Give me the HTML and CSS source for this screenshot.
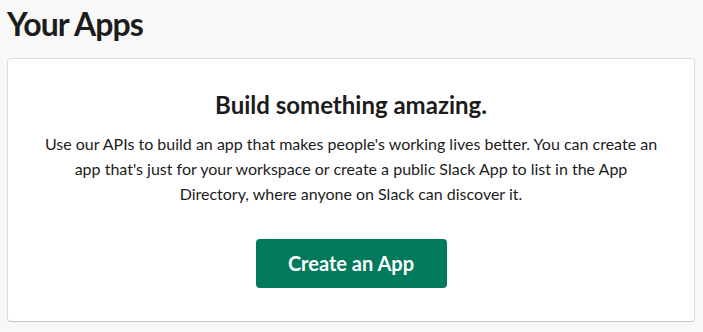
FILE: index.html
```html
<!DOCTYPE html>
<html>
<head>
    <title>Your Apps</title>
    <link rel="stylesheet" href="styles.css">
</head>
<body>
    <h1 class="page-title">Your Apps</h1>
    <div class="apps-card">
        <h2 class="card-title">Build something amazing.</h2>
        <p class="card-text">Use our APIs to build an app that makes people's working lives better. You can create an app that's just for your workspace or create a public Slack App to list in the App Directory, where anyone on Slack can discover it.</p>
        <a class="create-btn" href="#">Create an App</a>
    </div>
</body>
</html>
```

FILE: styles.css
```css
body {
    font-family: Lato, "Noto Sans", sans-serif;
    background-color: #f8f8f8;
    color: #1d1c1d;
    margin: 0;
    padding: 0 8px 0 7px;
}
.page-title {
    margin: 0;
    padding-top: 2px;
    font-size: 32px;
    font-weight: 700;
    line-height: 44px;
    letter-spacing: -0.9px;
    height: 56px;
}
.apps-card {
    background-color: white;
    border: 1px solid #dddddd;
    border-bottom-color: #c8c8c8;
    border-radius: 4px;
    box-shadow: 0 1px 0 rgba(0, 0, 0, 0.08);
    padding: 31px 36px 33px;
    display: flex;
    flex-direction: column;
    align-items: center;
    text-align: center;
}
.card-title {
    margin: 0 0 11px;
    font-size: 24px;
    font-weight: 700;
    line-height: 30px;
}
.card-text {
    margin: 0 0 33px;
    font-size: 16px;
    line-height: 25px;
    color: #1d1c1d;
}
.create-btn {
    display: block;
    width: 191px;
    height: 49px;
    line-height: 49px;
    background-color: #007a5a;
    color: white;
    border-radius: 4px;
    font-size: 20px;
    font-weight: 700;
    text-decoration: none;
}
```
